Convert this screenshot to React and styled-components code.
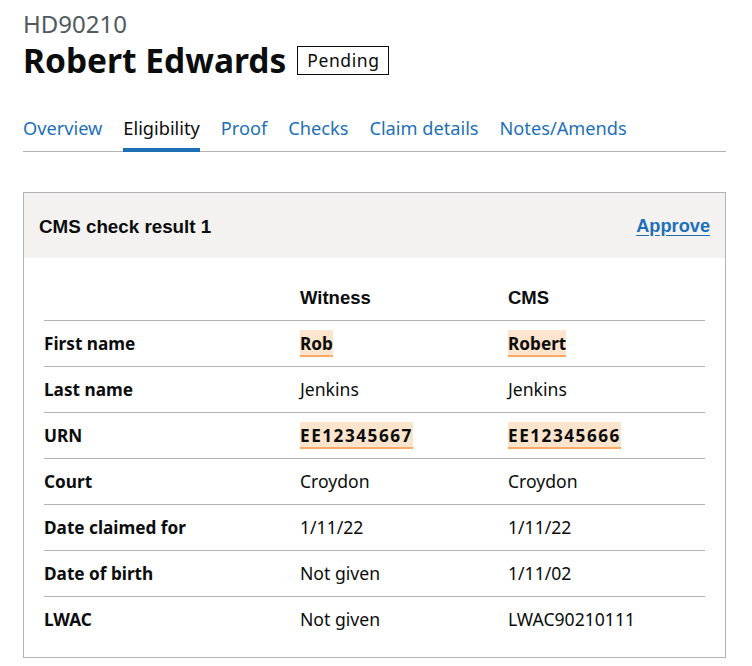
import React from "react"
import styled, { createGlobalStyle } from "styled-components"

const rows = [
  { label: "First name", witness: "Rob", cms: "Robert", mismatch: true },
  { label: "Last name", witness: "Jenkins", cms: "Jenkins" },
  { label: "URN", witness: "EE12345667", cms: "EE12345666", mismatch: true, numeric: true },
  { label: "Court", witness: "Croydon", cms: "Croydon" },
  { label: "Date claimed for", witness: "1/11/22", cms: "1/11/22" },
  { label: "Date of birth", witness: "Not given", cms: "1/11/02" },
  { label: "LWAC", witness: "Not given", cms: "LWAC90210111" },
]

const tabs = ["Overview", "Eligibility", "Proof", "Checks", "Claim details", "Notes/Amends"]

const Value = ({ row, text }) =>
  row.mismatch ? <Mismatch numeric={row.numeric}>{text}</Mismatch> : text

const App = () => {
  return (
    <Page>
      <GlobalStyle />
      <Caption>HD90210</Caption>
      <TitleRow>
        <Heading>Robert Edwards</Heading>
        <Tag>Pending</Tag>
      </TitleRow>
      <TabList>
        {tabs.map(tab => (
          <Tab key={tab} active={tab === "Eligibility"}>
            {tab}
          </Tab>
        ))}
      </TabList>
      <Card>
        <CardHeader>
          <CardTitle>CMS check result 1</CardTitle>
          <ApproveLink href="#">Approve</ApproveLink>
        </CardHeader>
        <CardBody>
          <Table>
            <colgroup>
              <col style={{ width: 256 }} />
              <col style={{ width: 208 }} />
              <col />
            </colgroup>
            <thead>
              <tr>
                <Th />
                <Th>Witness</Th>
                <Th>CMS</Th>
              </tr>
            </thead>
            <tbody>
              {rows.map((row, i) => {
                const last = i === rows.length - 1
                return (
                  <tr key={row.label}>
                    <RowLabel last={last}>{row.label}</RowLabel>
                    <Td last={last}>
                      <Value row={row} text={row.witness} />
                    </Td>
                    <Td last={last}>
                      <Value row={row} text={row.cms} />
                    </Td>
                  </tr>
                )
              })}
            </tbody>
          </Table>
        </CardBody>
      </Card>
    </Page>
  )
}

export default App

const GlobalStyle = createGlobalStyle`
  body {
    margin: 0;
    background: #fff;
    color: #0b0c0c;
    font-family: "Noto Sans", sans-serif;
  }
`
const Page = styled.div`
  padding: 9px 26px 0 23px;
`
const Caption = styled.div`
  font-size: 24px;
  line-height: 30px;
  color: #505a5f;
`
const TitleRow = styled.div`
  display: flex;
  align-items: center;
  gap: 11px;
  margin-top: 1px;
`
const Heading = styled.h1`
  margin: 0;
  font-size: 33.5px;
  line-height: 40px;
  font-weight: 700;
`
const Tag = styled.span`
  border: 1px solid #0b0c0c;
  font-size: 17.5px;
  line-height: 19px;
  padding: 4px 8px 4px 9px;
  letter-spacing: 0.6px;
`
const TabList = styled.div`
  display: flex;
  gap: 21px;
  margin-top: 36px;
  border-bottom: 1px solid #b1b4b6;
`
const Tab = styled.a`
  font-size: 18.2px;
  line-height: 25px;
  padding-bottom: 7px;
  color: ${p => (p.active ? "#0b0c0c" : "#1d70b8")};
  border-bottom: 4px solid ${p => (p.active ? "#1d70b8" : "transparent")};
  margin-bottom: -1px;
  cursor: pointer;
`
const Card = styled.div`
  margin-top: 40px;
  border: 1px solid #b1b4b6;
`
const CardHeader = styled.div`
  display: flex;
  justify-content: space-between;
  align-items: center;
  height: 65px;
  padding: 2px 15px 0;
  box-sizing: border-box;
  background: #f3f2f1;
  font-family: "Liberation Sans", Arial, sans-serif;
`
const CardTitle = styled.div`
  font-weight: 700;
  font-size: 18.8px;
`
const ApproveLink = styled.a`
  font-weight: 700;
  font-size: 18.2px;
  color: #1d70b8;
  text-decoration: underline;
  text-underline-offset: 3px;
`
const CardBody = styled.div`
  padding: 22px 20px 15px;
`
const Table = styled.table`
  width: 100%;
  border-collapse: collapse;
  table-layout: fixed;
`
const Th = styled.th`
  text-align: left;
  font-family: "Liberation Sans", Arial, sans-serif;
  font-weight: 700;
  font-size: 18.5px;
  line-height: 25px;
  padding: 5px 0 10px;
  border-bottom: 1px solid #b1b4b6;
`
const Td = styled.td`
  font-size: 17.6px;
  line-height: 25px;
  padding: 10px 0;
  border-bottom: ${p => (p.last ? "none" : "1px solid #b1b4b6")};
`
const RowLabel = styled(Td)`
  font-size: 17.2px;
  font-weight: 700;
`
const Mismatch = styled.span`
  font-weight: 700;
  font-size: 17.2px;
  letter-spacing: ${p => (p.numeric ? "1.5px" : "0")};
  background: #fde4cc;
  border-bottom: 2px solid #ffaa66;
  padding: 2px 0 0;
`
